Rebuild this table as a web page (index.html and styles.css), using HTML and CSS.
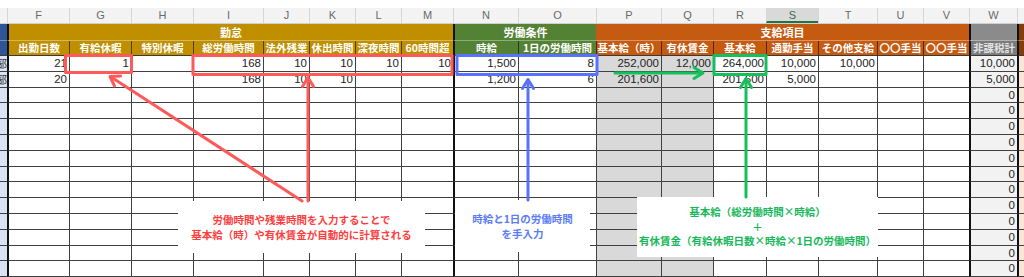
FILE: index.html
```html
<!DOCTYPE html>
<html lang="ja">
<head>
<meta charset="utf-8">
<title>給与計算シート</title>
<link rel="stylesheet" href="styles.css">
</head>
<body>
<div class="sheet">
  <div class="row letters">
    <div class="c"></div><div class="c">F</div><div class="c">G</div><div class="c">H</div><div class="c">I</div><div class="c">J</div><div class="c">K</div><div class="c">L</div><div class="c">M</div><div class="c">N</div><div class="c">O</div><div class="c">P</div><div class="c">Q</div><div class="c">R</div><div class="c sel">S</div><div class="c">T</div><div class="c">U</div><div class="c">V</div><div class="c">W</div><div class="c"></div>
  </div>
  <div class="row groups">
    <div class="c navy"></div>
    <div class="c gold tk span8">勤怠</div>
    <div class="c green tk span2">労働条件</div>
    <div class="c orange span7">支給項目</div>
    <div class="c gray tk"></div>
    <div class="c brown tk"></div>
  </div>
  <div class="row heads">
    <div class="c navy"></div>
    <div class="c gold tk">出勤日数</div>
    <div class="c gold">有給休暇</div>
    <div class="c gold">特別休暇</div>
    <div class="c gold">総労働時間</div>
    <div class="c gold">法外残業</div>
    <div class="c gold">休出時間</div>
    <div class="c gold">深夜時間</div>
    <div class="c gold">60時間超</div>
    <div class="c green tk">時給</div>
    <div class="c green">1日の労働時間</div>
    <div class="c orange">基本給（時）</div>
    <div class="c orange">有休賃金</div>
    <div class="c orange">基本給</div>
    <div class="c orange">通勤手当</div>
    <div class="c orange">その他支給</div>
    <div class="c orange">〇〇手当</div>
    <div class="c orange">〇〇手当</div>
    <div class="c gray2 tk">非課税計</div>
    <div class="c brown tk"></div>
  </div>

  <div class="row data"><div class="c lh"><span>部</span></div><div class="c tk">21</div><div class="c">1</div><div class="c"></div><div class="c">168</div><div class="c">10</div><div class="c">10</div><div class="c">10</div><div class="c">10</div><div class="c tk">1,500</div><div class="c">8</div><div class="c g">252,000</div><div class="c g">12,000</div><div class="c">264,000</div><div class="c">10,000</div><div class="c">10,000</div><div class="c"></div><div class="c"></div><div class="c tk w">10,000</div><div class="c tk x"></div></div>
  <div class="row data"><div class="c lh"><span>部</span></div><div class="c tk">20</div><div class="c"></div><div class="c"></div><div class="c">168</div><div class="c">10</div><div class="c">10</div><div class="c"></div><div class="c"></div><div class="c tk">1,200</div><div class="c">6</div><div class="c g">201,600</div><div class="c g"></div><div class="c">201,600</div><div class="c">5,000</div><div class="c"></div><div class="c"></div><div class="c"></div><div class="c tk w">5,000</div><div class="c tk x"></div></div>
  <div class="row data"><div class="c lh"></div><div class="c tk"></div><div class="c"></div><div class="c"></div><div class="c"></div><div class="c"></div><div class="c"></div><div class="c"></div><div class="c"></div><div class="c tk"></div><div class="c"></div><div class="c g"></div><div class="c g"></div><div class="c"></div><div class="c"></div><div class="c"></div><div class="c"></div><div class="c"></div><div class="c tk w">0</div><div class="c tk x"></div></div>
  <div class="row data"><div class="c lh"></div><div class="c tk"></div><div class="c"></div><div class="c"></div><div class="c"></div><div class="c"></div><div class="c"></div><div class="c"></div><div class="c"></div><div class="c tk"></div><div class="c"></div><div class="c g"></div><div class="c g"></div><div class="c"></div><div class="c"></div><div class="c"></div><div class="c"></div><div class="c"></div><div class="c tk w">0</div><div class="c tk x"></div></div>
  <div class="row data"><div class="c lh"></div><div class="c tk"></div><div class="c"></div><div class="c"></div><div class="c"></div><div class="c"></div><div class="c"></div><div class="c"></div><div class="c"></div><div class="c tk"></div><div class="c"></div><div class="c g"></div><div class="c g"></div><div class="c"></div><div class="c"></div><div class="c"></div><div class="c"></div><div class="c"></div><div class="c tk w">0</div><div class="c tk x"></div></div>
  <div class="row data"><div class="c lh"></div><div class="c tk"></div><div class="c"></div><div class="c"></div><div class="c"></div><div class="c"></div><div class="c"></div><div class="c"></div><div class="c"></div><div class="c tk"></div><div class="c"></div><div class="c g"></div><div class="c g"></div><div class="c"></div><div class="c"></div><div class="c"></div><div class="c"></div><div class="c"></div><div class="c tk w">0</div><div class="c tk x"></div></div>
  <div class="row data"><div class="c lh"></div><div class="c tk"></div><div class="c"></div><div class="c"></div><div class="c"></div><div class="c"></div><div class="c"></div><div class="c"></div><div class="c"></div><div class="c tk"></div><div class="c"></div><div class="c g"></div><div class="c g"></div><div class="c"></div><div class="c"></div><div class="c"></div><div class="c"></div><div class="c"></div><div class="c tk w">0</div><div class="c tk x"></div></div>
  <div class="row data"><div class="c lh"></div><div class="c tk"></div><div class="c"></div><div class="c"></div><div class="c"></div><div class="c"></div><div class="c"></div><div class="c"></div><div class="c"></div><div class="c tk"></div><div class="c"></div><div class="c g"></div><div class="c g"></div><div class="c"></div><div class="c"></div><div class="c"></div><div class="c"></div><div class="c"></div><div class="c tk w">0</div><div class="c tk x"></div></div>
  <div class="row data"><div class="c lh"></div><div class="c tk"></div><div class="c"></div><div class="c"></div><div class="c"></div><div class="c"></div><div class="c"></div><div class="c"></div><div class="c"></div><div class="c tk"></div><div class="c"></div><div class="c g"></div><div class="c g"></div><div class="c"></div><div class="c"></div><div class="c"></div><div class="c"></div><div class="c"></div><div class="c tk w">0</div><div class="c tk x"></div></div>
  <div class="row data"><div class="c lh"></div><div class="c tk"></div><div class="c"></div><div class="c"></div><div class="c"></div><div class="c"></div><div class="c"></div><div class="c"></div><div class="c"></div><div class="c tk"></div><div class="c"></div><div class="c g"></div><div class="c g"></div><div class="c"></div><div class="c"></div><div class="c"></div><div class="c"></div><div class="c"></div><div class="c tk w">0</div><div class="c tk x"></div></div>
  <div class="row data"><div class="c lh"></div><div class="c tk"></div><div class="c"></div><div class="c"></div><div class="c"></div><div class="c"></div><div class="c"></div><div class="c"></div><div class="c"></div><div class="c tk"></div><div class="c"></div><div class="c g"></div><div class="c g"></div><div class="c"></div><div class="c"></div><div class="c"></div><div class="c"></div><div class="c"></div><div class="c tk w">0</div><div class="c tk x"></div></div>
  <div class="row data"><div class="c lh"></div><div class="c tk"></div><div class="c"></div><div class="c"></div><div class="c"></div><div class="c"></div><div class="c"></div><div class="c"></div><div class="c"></div><div class="c tk"></div><div class="c"></div><div class="c g"></div><div class="c g"></div><div class="c"></div><div class="c"></div><div class="c"></div><div class="c"></div><div class="c"></div><div class="c tk w">0</div><div class="c tk x"></div></div>
  <div class="row data"><div class="c lh"></div><div class="c tk"></div><div class="c"></div><div class="c"></div><div class="c"></div><div class="c"></div><div class="c"></div><div class="c"></div><div class="c"></div><div class="c tk"></div><div class="c"></div><div class="c g"></div><div class="c g"></div><div class="c"></div><div class="c"></div><div class="c"></div><div class="c"></div><div class="c"></div><div class="c tk w">0</div><div class="c tk x"></div></div>
  <div class="row data"><div class="c lh"></div><div class="c tk"></div><div class="c"></div><div class="c"></div><div class="c"></div><div class="c"></div><div class="c"></div><div class="c"></div><div class="c"></div><div class="c tk"></div><div class="c"></div><div class="c g"></div><div class="c g"></div><div class="c"></div><div class="c"></div><div class="c"></div><div class="c"></div><div class="c"></div><div class="c tk w">0</div><div class="c tk x"></div></div>
</div>

<svg class="marks" width="1024" height="277" viewBox="0 0 1024 277" xmlns="http://www.w3.org/2000/svg">
  <g fill="none" stroke-width="3" stroke-linecap="round" stroke-linejoin="round">
    <g stroke="#ff5a5a">
      <rect x="65.5" y="55.5" width="66" height="17"/>
      <rect x="193" y="55.5" width="259" height="19"/>
      <line x1="302" y1="201" x2="111" y2="77"/>
      <polyline points="114.5,86 110,76.5 120.5,76"/>
      <line x1="308" y1="201" x2="308" y2="78"/>
      <polyline points="302.5,86.5 308,77.5 313.5,86.5"/>
    </g>
    <g stroke="#5872ff">
      <rect x="457" y="55.5" width="140" height="19"/>
      <line x1="528" y1="200" x2="528" y2="80"/>
      <polyline points="522.5,88.5 528,79.5 533.5,88.5"/>
    </g>
    <g stroke="#16bf5c">
      <rect x="714" y="55.5" width="52" height="19"/>
      <line x1="615" y1="73" x2="702" y2="73"/>
      <polyline points="694,67.5 703,73 694,78.5"/>
      <line x1="746" y1="197" x2="746" y2="79"/>
      <polyline points="740.5,87.5 746,78.5 751.5,87.5"/>
    </g>
  </g>
</svg>

<div class="note note-red">
  <p>労働時間や残業時間を入力することで</p>
  <p>基本給（時）や有休賃金が自動的に計算される</p>
</div>
<div class="note note-blue">
  <p>時給と1日の労働時間</p>
  <p>を手入力</p>
</div>
<div class="note note-green">
  <p>基本給（総労働時間×時給）</p>
  <p>＋</p>
  <p>有休賃金（有給休暇日数×時給×1日の労働時間）</p>
</div>
</body>
</html>
```

FILE: styles.css
```css
html, body {
  margin: 0;
  padding: 0;
}
body {
  width: 1024px;
  height: 277px;
  overflow: hidden;
  position: relative;
  background: #ffffff;
  font-family: "Liberation Sans", "Noto Sans CJK JP", sans-serif;
}
.sheet {
  padding-top: 8px;
}
.row {
  display: grid;
  grid-template-columns: 7px 62px 62px 62px 70px 46px 46px 46px 52px 65px 78px 65px 52px 53px 52px 59px 46px 46px 48px 7px;
}
.c {
  box-sizing: border-box;
  min-width: 0;
  overflow: hidden;
  white-space: nowrap;
}

/* column letters */
.letters {
  height: 16px;
  background: #f3f3f3;
  border-bottom: 1px solid #d0d0d0;
  box-sizing: border-box;
}
.letters .c {
  border-left: 1px solid #d6d6d6;
  color: #6a6a6a;
  font-size: 11px;
  line-height: 15px;
  text-align: center;
}
.letters .c:first-child { border-left: 0; }
.letters .sel {
  background: #d9d9d9;
  color: #3a6b4a;
  border-bottom: 2px solid #217346;
}

/* header rows */
.groups { height: 17px; }
.heads { height: 15px; }
.groups .c, .heads .c {
  color: #ffffff;
  font-family: "Noto Sans CJK JP", sans-serif;
  font-weight: 700;
  font-size: 10.5px;
  text-align: center;
}
.groups .c {
  line-height: 17px;
  font-size: 11px;
  border-bottom: 1px solid rgba(255, 255, 255, 0.35);
}
.heads .c {
  line-height: 14px;
  border-left: 1px solid rgba(0, 0, 0, 0.55);
  border-bottom: 1px solid #3a3a3a;
}
.heads .c:first-child { border-left: 0; }
.span8 { grid-column: span 8; }
.span2 { grid-column: span 2; }
.span7 { grid-column: span 7; }
.navy { background: #2f5597; }
.gold { background: #bf8f00; }
.green { background: #548235; }
.orange { background: #c55a11; }
.gray { background: #8b8b8b; }
.gray2 { background: #7b7b7b; }
.heads .gray2 { color: #e2e2e2; }
.brown { background: #843c0c; }
.groups .tk, .heads .tk {
  border-left: 2px solid #111111;
}

/* data rows */
.data { height: 15.8px; }
.data .c {
  border-left: 1px solid #404040;
  border-bottom: 1px solid #404040;
  font-size: 11.5px;
  line-height: 14.5px;
  color: #222222;
  text-align: right;
  padding-right: 2px;
}
.data .tk { border-left: 2px solid #111111; }
.data .lh {
  border-left: 0;
  padding-right: 0;
  background: #dae3f3;
  display: flex;
  justify-content: flex-end;
  font-family: "Noto Sans CJK JP", sans-serif;
  font-size: 11px;
  color: #333333;
}
.data .lh span { flex: none; }
.data .g { background: #d9d9d9; }
.data .w { background: #f2f2f2; }
.data .x { background: #fbe5d6; }

/* overlay annotations */
.marks {
  position: absolute;
  left: 0;
  top: 0;
  z-index: 3;
}
.note {
  position: absolute;
  z-index: 2;
  background: #ffffff;
  box-sizing: border-box;
  display: flex;
  flex-direction: column;
  justify-content: center;
  align-items: center;
  font-family: "Noto Sans CJK JP", sans-serif;
  font-weight: 700;
  font-size: 10.5px;
}
.note p {
  margin: 0;
  white-space: nowrap;
}
.note-red {
  left: 178px;
  top: 201px;
  width: 247px;
  height: 52px;
  color: #ff3d3d;
  line-height: 15px;
}
.note-blue {
  left: 455px;
  top: 200px;
  width: 135px;
  height: 52px;
  color: #5b7cf7;
  line-height: 15px;
}
.note-green {
  left: 637px;
  top: 197px;
  width: 241px;
  height: 60px;
  color: #16b85a;
  line-height: 14.5px;
}
```
